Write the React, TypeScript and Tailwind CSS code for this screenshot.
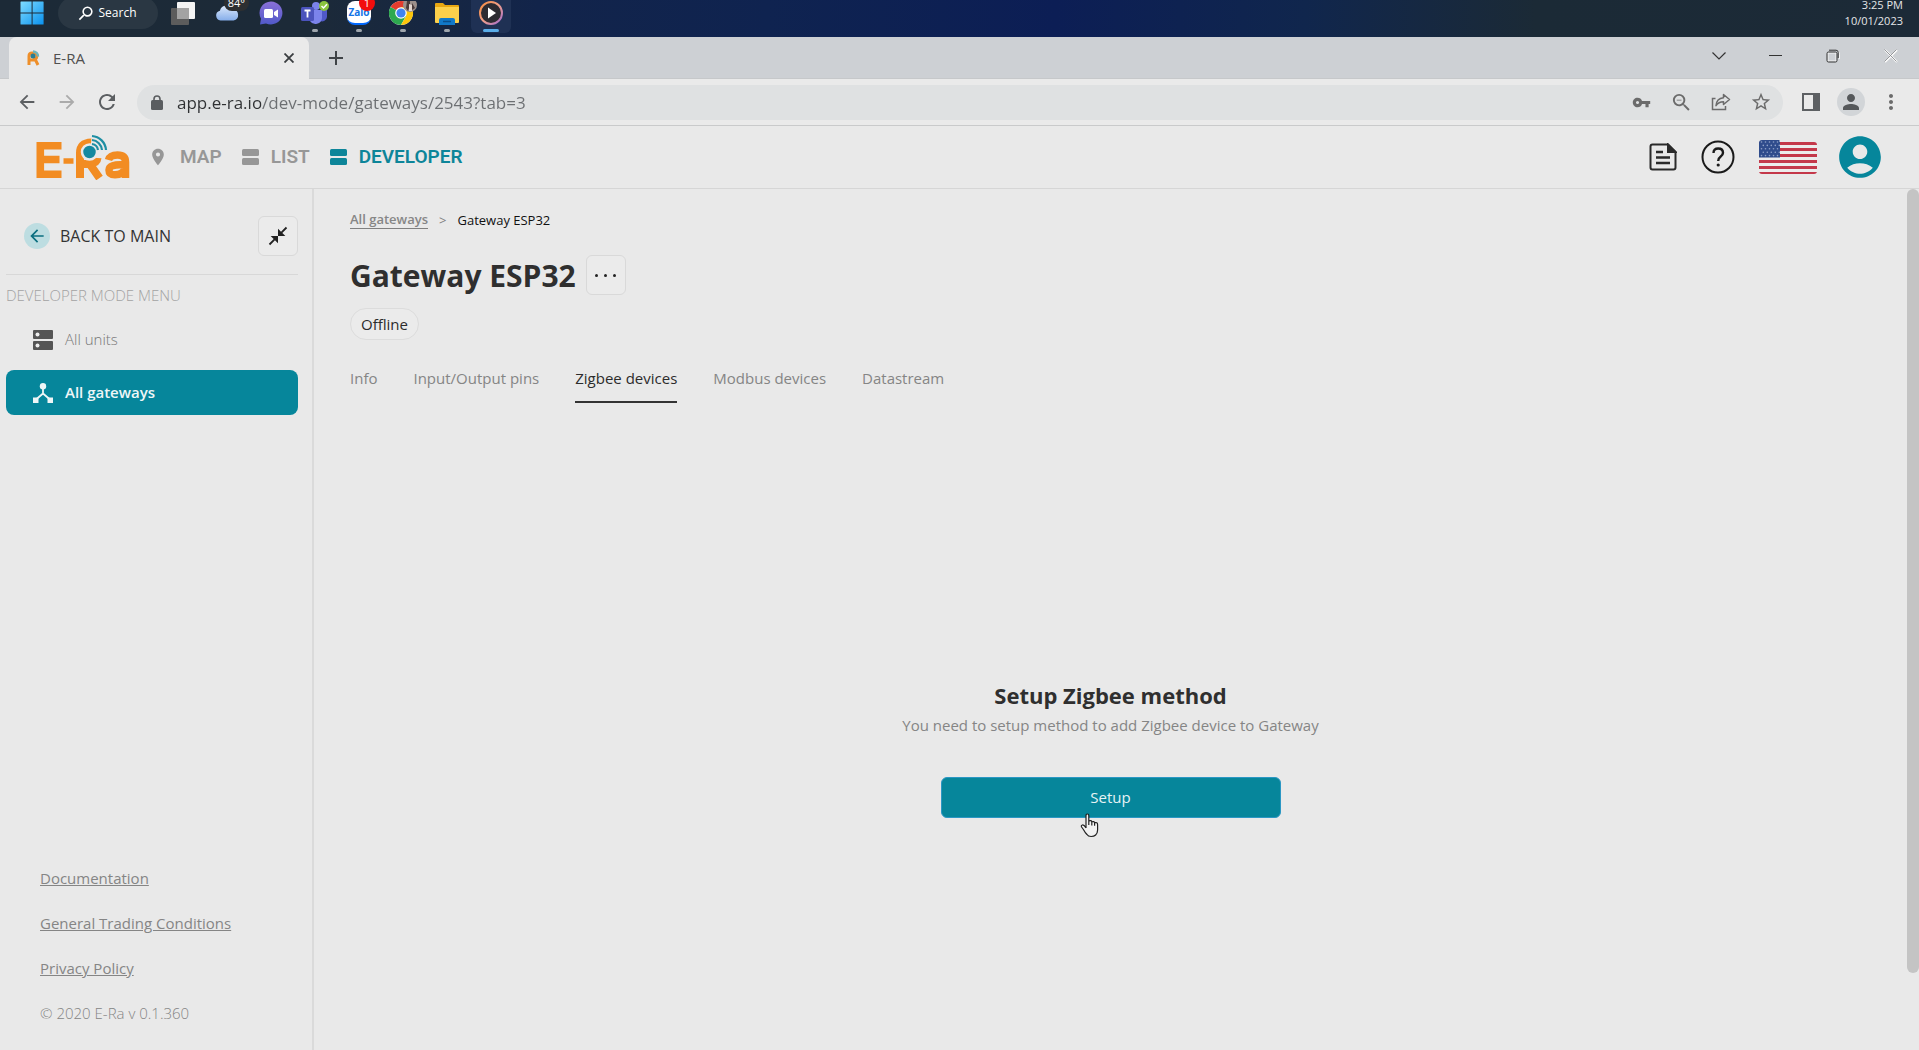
import type { ReactNode } from "react";
import {
  MdAccountCircle,
  MdArrowBack,
  MdArrowForward,
  MdCloseFullscreen,
  MdLocationOn,
  MdMoreVert,
  MdPerson,
  MdRefresh,
  MdSearch,
  MdStarBorder,
  MdVpnKey,
  MdZoomOut,
} from "react-icons/md";

/* ---------- Taskbar icons ---------- */

function WindowsLogo() {
  return (
    <svg width="24" height="24" viewBox="0 0 24 24" aria-hidden="true">
      <defs>
        <linearGradient id="win" x1="0" y1="0" x2="1" y2="1">
          <stop offset="0" stopColor="#7fdcff" />
          <stop offset="1" stopColor="#0a91ee" />
        </linearGradient>
      </defs>
      <path d="M1 .5h10.6v11H.5V1a.5.5 0 0 1 .5-.5zM12.6.5h10.5a.5.5 0 0 1 .5.5v10.5h-11zM.5 12.5h11.1v11H1a.5.5 0 0 1-.5-.5zM12.6 12.5h11V23a.5.5 0 0 1-.5.5H12.6z" fill="url(#win)" />
    </svg>
  );
}

function TaskView() {
  return (
    <svg width="24" height="24" viewBox="0 0 24 24" aria-hidden="true">
      <rect x="6" y="1" width="18" height="17" rx="1" fill="#f4f4f4" />
      <rect x="0" y="7" width="18" height="17" rx="1" fill="#5c5c5c" />
      <rect x="6" y="7" width="12" height="11" fill="#a3a3a3" />
    </svg>
  );
}

function WeatherCloud() {
  return (
    <svg width="24" height="24" viewBox="0 0 24 24" aria-hidden="true">
      <defs>
        <linearGradient id="cloud" x1="0" y1="0" x2="0" y2="1">
          <stop offset="0" stopColor="#dbe8fb" />
          <stop offset="1" stopColor="#86aeea" />
        </linearGradient>
      </defs>
      <path d="M5.500 19.500a5 5 0 0 1-.6-9.800A7 7 0 0 1 18 8.600a5.500 5.500 0 0 1 .6 10.900z" fill="url(#cloud)" />
    </svg>
  );
}

function ChatIcon() {
  return (
    <svg width="24" height="24" viewBox="0 0 24 24" aria-hidden="true">
      <defs>
        <linearGradient id="chat" x1="0" y1="0" x2="0" y2="1">
          <stop offset="0" stopColor="#8a70d8" />
          <stop offset="1" stopColor="#5059c9" />
        </linearGradient>
      </defs>
      <path d="M12 .5a11.500 11.500 0 1 1-5 21.900L1 23.500l1-5.800A11.500 11.500 0 0 1 12 .5z" fill="url(#chat)" />
      <rect x="5" y="8" width="9" height="9" rx="1.500" fill="#fff" />
      <path d="M15 11l4-2.500v8L15 14z" fill="#fff" />
    </svg>
  );
}

function TeamsIcon() {
  return (
    <svg width="28" height="24" viewBox="0 0 28 24" aria-hidden="true">
      <circle cx="15" cy="5" r="4" fill="#7b83eb" />
      <path d="M17 9h9v7a5 5 0 0 1-7 4z" fill="#5059c9" />
      <path d="M9 9h12v8a6.500 6.500 0 0 1-12 3z" fill="#7b83eb" />
      <rect x="0" y="6" width="13" height="14" rx="1.500" fill="#4b53bc" />
      <path d="M3.500 9.500h6M6.500 9.500v7" stroke="#fff" strokeWidth="1.800" />
      <circle cx="23" cy="5" r="5" fill="#8ac43f" />
      <path d="M20.500 5l2 2 3.500-3.800" fill="none" stroke="#fff" strokeWidth="1.500" />
    </svg>
  );
}

function ZaloIcon() {
  return (
    <span className="relative flex size-6 items-center justify-center rounded-lg border-b-2 border-[#0068ff] bg-white text-[10px] font-bold text-[#1273e6]">
      Zalo
      <span className="absolute -top-1.5 -right-1 flex size-4 items-center justify-center rounded-full bg-[#f20d0d] text-[11px] font-normal text-white">
        1
      </span>
    </span>
  );
}

function ChromeIcon() {
  return (
    <svg width="28" height="24" viewBox="0 0 28 24" aria-hidden="true">
      <circle cx="12" cy="12" r="12" fill="#fff" />
      <path d="M12 12L1.600 6A12 12 0 0 1 22.400 6z" fill="#e33b2e" />
      <path d="M12 12L1.600 6A12 12 0 0 0 12 24l5-9z" fill="#2da94f" />
      <path d="M12 6h10.400A12 12 0 0 1 12 24l5.200-9z" fill="#fdc60a" />
      <circle cx="12" cy="12" r="5.800" fill="#fff" />
      <circle cx="12" cy="12" r="4.600" fill="#3f83f1" />
      <circle cx="21" cy="4" r="7" fill="#9b8f8b" />
      <path d="M18 0h3v4l-2 6-2-3zM23 2l3 5-3 2z" fill="#4a3b3b" />
      <path d="M20 3l3 1v6h-3z" fill="#e2d6d0" />
    </svg>
  );
}

function FolderIcon() {
  return (
    <svg width="24" height="24" viewBox="0 0 24 24" aria-hidden="true">
      <path d="M0 3a1 1 0 0 1 1-1h7l2 2h13a1 1 0 0 1 1 1v4H0z" fill="#e8a712" />
      <path d="M0 6h24v15a1 1 0 0 1-1 1H1a1 1 0 0 1-1-1z" fill="#fcd04b" />
      <path d="M4 24v-5a2 2 0 0 1 2-2h12a2 2 0 0 1 2 2v5z" fill="#1179c9" />
      <path d="M8 20.500h8" stroke="#0a4f8c" strokeWidth="1.500" />
    </svg>
  );
}

function PlayerIcon() {
  return (
    <svg width="24" height="24" viewBox="0 0 24 24" aria-hidden="true">
      <defs>
        <linearGradient id="ring" x1="0" y1="0" x2="1" y2="1">
          <stop offset="0" stopColor="#f58a3c" />
          <stop offset=".5" stopColor="#f0a08a" />
          <stop offset="1" stopColor="#a06bd0" />
        </linearGradient>
      </defs>
      <circle cx="12" cy="12" r="11" fill="#2c2b31" stroke="url(#ring)" strokeWidth="2" />
      <path d="M9 6.500l8 5.500-8 5.500z" fill="#fff" />
    </svg>
  );
}

function TaskButton({
  label,
  children,
  running = false,
}: {
  label: string;
  children: ReactNode;
  running?: boolean;
}) {
  return (
    <button type="button" aria-label={label} className="relative flex h-12 w-11 items-center justify-center">
      {children}
      {running && <span className="absolute bottom-[5px] h-[3px] w-1.5 rounded-full bg-[#9fa6ad]" />}
    </button>
  );
}

function Taskbar() {
  return (
    <div className="flex h-[37px] shrink-0 items-end justify-between overflow-hidden bg-[linear-gradient(90deg,#1c2a37_0%,#1c2a38_16%,#12244a_28%,#0f2350_40%,#0c1e55_55%,#10264d_68%,#1b2a36_80%,#1c2a37_100%)] text-white">
      <div className="flex h-12 items-center pl-2.5">
        <TaskButton label="Start">
          <WindowsLogo />
        </TaskButton>
        <button type="button" className="mr-[3px] ml-1 flex h-8 w-[100px] items-center justify-center gap-1 rounded-full bg-[#2a3743] pr-1 text-[12px]">
          <MdSearch size={19} className="-scale-x-100" />
          Search
        </button>
        <TaskButton label="Task view">
          <TaskView />
        </TaskButton>
        <TaskButton label="Weather">
          <WeatherCloud />
          <span className="absolute top-1.5 right-0 rounded-full bg-[#2d2f31] px-1 text-[11px] leading-4">84°</span>
        </TaskButton>
        <TaskButton label="Chat">
          <ChatIcon />
        </TaskButton>
        <TaskButton label="Teams" running>
          <TeamsIcon />
        </TaskButton>
        <TaskButton label="Zalo" running>
          <ZaloIcon />
        </TaskButton>
        <TaskButton label="Chrome" running>
          <ChromeIcon />
        </TaskButton>
        <TaskButton label="File Explorer" running>
          <FolderIcon />
        </TaskButton>
        <button type="button" aria-label="Media player" className="relative ml-0.5 flex size-10 items-center justify-center rounded-md bg-[#1f3154]">
          <PlayerIcon />
          <span className="absolute bottom-px h-[3px] w-4 rounded-full bg-[#5aaeea]" />
        </button>
      </div>
      <div className="flex h-12 flex-col justify-center pr-4 text-right text-[11px] leading-4 text-[#e4e6e8]">
        <span>3:25 PM</span>
        <span>10/01/2023</span>
      </div>
    </div>
  );
}

/* ---------- Browser chrome ---------- */

function Favicon() {
  return (
    <svg width="14" height="16" viewBox="0 0 14 16" aria-hidden="true">
      <path d="M2 15V6q0-3 3-3h2q3 0 3 3 0 2-2 3l3 6M3.500 10H8" fill="none" stroke="#ee8f2a" strokeWidth="3" />
      <circle cx="6" cy="6" r="2.500" fill="#2a7d92" />
      <path d="M6 1.500a5 5 0 0 1 5 5" fill="none" stroke="#6cb5bd" strokeWidth="2.500" />
    </svg>
  );
}

function TabStrip() {
  return (
    <div className="flex h-[42px] shrink-0 items-stretch justify-between border-b border-[#c6c8ca] bg-[#cdd0d4]">
      <div className="flex">
        <div className="-mb-px ml-[9px] flex w-[300px] items-center rounded-t-lg bg-[#eaeaea] pr-3 pl-[18px] text-[15px] text-[#505050]">
          <Favicon />
          <span className="ml-3 flex-1">E-RA</span>
          <button type="button" aria-label="Close tab" className="flex size-4 items-center justify-center">
            <svg width="10" height="10" viewBox="0 0 10 10" aria-hidden="true">
              <path d="M.5.5l9 9M9.500.5l-9 9" stroke="#3a3d40" strokeWidth="1.800" />
            </svg>
          </button>
        </div>
        <button type="button" aria-label="New tab" className="ml-[15px] flex w-6 items-center justify-center">
          <svg width="16" height="16" viewBox="0 0 16 16" aria-hidden="true">
            <path d="M8 1v14M1 8h14" stroke="#3f4347" strokeWidth="2" />
          </svg>
        </button>
      </div>
      <div className="flex pb-1">
        <button type="button" aria-label="Search tabs" className="flex w-14 items-center justify-center">
          <svg width="14" height="8" viewBox="0 0 14 8" aria-hidden="true">
            <path d="M.5.5L7 7 13.500.5" fill="none" stroke="#333" strokeWidth="1.200" />
          </svg>
        </button>
        <button type="button" aria-label="Minimize" className="flex w-[57px] items-center justify-center">
          <span className="h-px w-[13px] bg-[#333]" />
        </button>
        <button type="button" aria-label="Restore" className="flex w-[58px] items-center justify-center">
          <svg width="14" height="14" viewBox="0 0 14 14" aria-hidden="true">
            <path d="M12 2.500q1.500 1 1.500 3V10" fill="none" stroke="#f4f4f4" />
            <rect x="2" y="4" width="8" height="8" fill="none" stroke="#f4f4f4" />
            <rect x="1" y="3" width="10" height="10" rx="1.500" fill="none" stroke="#333" />
            <path d="M3 1.200h7q2.200 0 2.200 2.200V9" fill="none" stroke="#333" />
          </svg>
        </button>
        <button type="button" aria-label="Close" className="flex w-[57px] items-center justify-center">
          <svg width="14" height="14" viewBox="0 0 14 14" aria-hidden="true">
            <path d="M1 1l12 12M13 1L1 13" stroke="#fafafa" strokeWidth="2" />
            <path d="M.5.5l12 12M12.500.5l-12 12" stroke="#7d8084" strokeWidth=".8" />
          </svg>
        </button>
      </div>
    </div>
  );
}

function LockIcon() {
  return (
    <svg width="12" height="15" viewBox="0 0 12 15" aria-hidden="true">
      <rect x="0" y="5" width="12" height="10" rx="1.500" fill="#5a5d60" />
      <path d="M3 6V4a3 3 0 0 1 6 0v2" fill="none" stroke="#5a5d60" strokeWidth="1.600" />
    </svg>
  );
}

function ShareIcon() {
  return (
    <svg width="20" height="18" viewBox="0 0 20 18" fill="none" stroke="#6b6b6b" strokeWidth="1.500" aria-hidden="true">
      <path d="M4.500 5.500H1.500v11h13V13" />
      <path d="M12.500 1.500l6 5-6 5V8.700q-5 0-7.500 4 .5-7.500 7.500-8z" strokeLinejoin="round" />
    </svg>
  );
}

function IconButton({ label, children }: { label: string; children: ReactNode }) {
  return (
    <button type="button" aria-label={label} className="flex size-10 items-center justify-center text-[#6b6b6b]">
      {children}
    </button>
  );
}

function Toolbar() {
  return (
    <div className="flex h-[47px] shrink-0 items-center border-b border-[#c9cacb] bg-[#eaeaea] pr-2 pl-[7px]">
      <button type="button" aria-label="Back" className="flex size-10 items-center justify-center text-[#5c5f62]">
        <MdArrowBack size={22} />
      </button>
      <button type="button" aria-label="Forward" className="flex size-10 items-center justify-center text-[#ababab]">
        <MdArrowForward size={22} />
      </button>
      <button type="button" aria-label="Reload" className="flex size-10 items-center justify-center text-[#5c5f62]">
        <MdRefresh size={24} />
      </button>
      <div className="ml-2.5 flex h-[35px] flex-1 items-center rounded-full bg-[#dfe1e2] pr-0.5 pl-3.5">
        <LockIcon />
        <input
          type="text"
          aria-label="Address"
          defaultValue="app.e-ra.io/dev-mode/gateways/2543?tab=3"
          className="ml-3.5 h-8 min-w-0 flex-1 bg-[linear-gradient(90deg,#2f3133_84px,#6c6f72_84px)] bg-clip-text text-[17px] text-transparent outline-none"
        />
        <IconButton label="Passwords">
          <MdVpnKey size={19} />
        </IconButton>
        <IconButton label="Zoom">
          <MdZoomOut size={23} />
        </IconButton>
        <IconButton label="Share">
          <ShareIcon />
        </IconButton>
        <IconButton label="Bookmark">
          <MdStarBorder size={22} />
        </IconButton>
      </div>
      <div className="ml-2 flex">
        <IconButton label="Side panel">
          <svg width="18" height="18" viewBox="0 0 18 18" aria-hidden="true">
            <rect x="1" y="1" width="16" height="16" fill="none" stroke="#5d6063" strokeWidth="2" />
            <rect x="11" y="1" width="6" height="16" fill="#5d6063" />
          </svg>
        </IconButton>
        <IconButton label="Profile">
          <span className="flex size-7 items-center justify-center rounded-full bg-[#d2d5d8] text-[#55585b]">
            <MdPerson size={24} />
          </span>
        </IconButton>
        <IconButton label="Menu">
          <MdMoreVert size={24} />
        </IconButton>
      </div>
    </div>
  );
}

/* ---------- App header ---------- */

function Logo() {
  return (
    <svg width="94" height="46" viewBox="0 0 94 46" aria-label="E-Ra" role="img">
      <g fill="none" stroke="#f28c22">
        <path d="M25.500 11.700H4.300v28.600h21.200M4.500 25.500h19" strokeWidth="7.600" />
        <path d="M27.500 27h10" strokeWidth="5.500" />
        <path d="M44 44V19q0-10 11.500-10.500M47 30h6q8-.5 8.500-6M53 29l10.500 15" strokeWidth="8" />
        <path d="M72.500 26q1.500-5 9-5 8 0 8 7v16M88 31q-15-1-15 5 0 4.800 6 4.800 8 0 10-6" strokeWidth="7.500" />
      </g>
      <circle cx="53.500" cy="18" r="7.500" fill="#1489a0" stroke="#e9e9e9" strokeWidth="2.500" />
      <g fill="none">
        <path d="M55.500 7a15 15 0 0 1 11 11" stroke="#e9e9e9" strokeWidth="9" />
        <g stroke="#1f8fa3" strokeWidth="2.200">
          <path d="M56 2a15 15 0 0 1 14 14" />
          <path d="M56 6a11 11 0 0 1 10 10" />
          <path d="M56 10a7 7 0 0 1 6 6" />
        </g>
      </g>
    </svg>
  );
}

function RowsIcon() {
  return (
    <svg width="17" height="16" viewBox="0 0 17 16" fill="currentColor" aria-hidden="true">
      <rect width="17" height="7" rx="1.500" />
      <rect y="9" width="17" height="7" rx="1.500" />
    </svg>
  );
}

function UsFlag() {
  const stars = [0, 1, 2, 3, 4];
  return (
    <svg width="58" height="34" viewBox="0 0 58 34" aria-hidden="true">
      <defs>
        <clipPath id="flag">
          <path d="M0 3q0-3 3-3h17.500v2H55q3 0 3 3v26q0 3-3 3H3q-3 0-3-3z" />
        </clipPath>
      </defs>
      <g clipPath="url(#flag)">
        <rect width="58" height="34" fill="#ececec" />
        {[2, 8, 14, 20, 26, 32].map((y) => (
          <rect key={y} y={y} width="58" height="3" fill="#c4384a" />
        ))}
        <rect width="21" height="17.500" fill="#2f4c8c" />
        {stars.map((r) =>
          stars.map((c) => (
            <circle key={`${r}-${c}`} cx={2.5 + c * 4 + (r % 2) * 1.8} cy={2 + r * 3.4} r=".8" fill="#8fa2c8" />
          )),
        )}
      </g>
    </svg>
  );
}

function Header() {
  return (
    <header className="flex h-[63px] shrink-0 items-center justify-between border-b border-[#d6d6d6] pr-[38px] pl-9">
      <div className="flex items-center">
        <Logo />
        <nav className="ml-[18px] flex items-center gap-5 font-[Roboto,sans-serif] text-[19px] font-semibold text-[#979797]">
          <a href="#map" className="flex items-center gap-3">
            <MdLocationOn size={20} />
            MAP
          </a>
          <a href="#list" className="flex items-center gap-3">
            <RowsIcon />
            LIST
          </a>
          <a href="#developer" className="flex items-center gap-3 text-[#0d8599]">
            <RowsIcon />
            DEVELOPER
          </a>
        </nav>
      </div>
      <div className="flex items-center">
        <button type="button" aria-label="News">
          <svg width="28" height="28" viewBox="0 0 28 28" fill="none" stroke="#2a2a2a" strokeWidth="2" aria-hidden="true">
            <path d="M19 1.500H3.500q-2 0-2 2v21q0 2 2 2h21q2 0 2-2V9z" />
            <path d="M19 1.500V9h7.500z" fill="#2a2a2a" />
            <path d="M7 9h7M7 14.500h14M7 20h14" strokeWidth="2.400" />
          </svg>
        </button>
        <button type="button" aria-label="Help" className="ml-6">
          <svg width="34" height="34" viewBox="0 0 34 34" fill="none" stroke="#1a1a1a" strokeWidth="2" aria-hidden="true">
            <circle cx="17" cy="17" r="15.500" />
            <path d="M12.500 13q0-4.500 4.700-4.500T22 12.700q0 2.300-2.500 4-2.300 1.600-2.300 4.300" strokeWidth="2.400" />
            <circle cx="17.200" cy="25" r="1.600" fill="#1a1a1a" stroke="none" />
          </svg>
        </button>
        <button type="button" aria-label="Language" className="ml-6">
          <UsFlag />
        </button>
        <button type="button" aria-label="Account" className="-mr-1 ml-[18px] text-[#06869b]">
          <MdAccountCircle size={50} />
        </button>
      </div>
    </header>
  );
}

/* ---------- Sidebar ---------- */

function UnitsIcon() {
  return (
    <svg width="20" height="20" viewBox="0 0 20 20" aria-hidden="true">
      <rect width="20" height="9" rx="1" fill="#555" />
      <rect y="11" width="20" height="9" rx="1" fill="#555" />
      <circle cx="4.500" cy="4.500" r="2" fill="#eee" />
      <circle cx="4.500" cy="15.500" r="2" fill="#eee" />
    </svg>
  );
}

function GatewayIcon() {
  return (
    <svg width="20" height="20" viewBox="0 0 20 20" fill="currentColor" aria-hidden="true">
      <circle cx="10" cy="3.200" r="3.200" />
      <rect y="14.500" width="5.500" height="5.500" />
      <rect x="14.500" y="14.500" width="5.500" height="5.500" />
      <path d="M10 5v6M3 16.500l7-6 7 6" fill="none" stroke="currentColor" strokeWidth="1.800" />
    </svg>
  );
}

function Sidebar() {
  return (
    <aside className="flex w-[314px] shrink-0 flex-col justify-between border-r-2 border-[#dadada] pt-[27px] pr-3.5 pb-[25px] pl-1.5">
      <div>
        <div className="flex items-center justify-between border-b border-[#d8d8d8] pb-[18px] pl-[18px]">
          <a href="#main" className="flex items-center gap-2.5 text-[16px] text-[#333]">
            <span className="flex size-[26px] items-center justify-center rounded-full bg-[#bddde1] text-[#0b6f80]">
              <MdArrowBack size={20} />
            </span>
            BACK TO MAIN
          </a>
          <button type="button" aria-label="Collapse menu" className="flex size-10 items-center justify-center rounded-md border border-[#d9d9d9] bg-[#ebebeb] text-[#222]">
            <MdCloseFullscreen size={22} />
          </button>
        </div>
        <p className="mt-2 text-[15px] leading-6 font-light text-[#a3a3a3]">DEVELOPER MODE MENU</p>
        <nav className="mt-2.5 flex flex-col gap-2 text-[15px]">
          <a href="#units" className="flex h-[45px] items-center gap-3 px-[27px] font-light text-[#777]">
            <UnitsIcon />
            All units
          </a>
          <a href="#gateways" className="flex h-[45px] items-center gap-3 rounded-lg bg-[#06869b] px-[27px] font-semibold text-[#eef6f7]">
            <GatewayIcon />
            All gateways
          </a>
        </nav>
      </div>
      <footer className="flex flex-col items-start gap-[21px] pl-[34px] text-[15px] leading-6 text-[#858585]">
        <a href="#docs" className="underline">
          Documentation
        </a>
        <a href="#terms" className="underline">
          General Trading Conditions
        </a>
        <a href="#privacy" className="underline">
          Privacy Policy
        </a>
        <span className="font-light">© 2020 E-Ra v 0.1.360</span>
      </footer>
    </aside>
  );
}

/* ---------- Main content ---------- */

const tabs = ["Info", "Input/Output pins", "Zigbee devices", "Modbus devices", "Datastream"];

function HandCursor() {
  return (
    <svg width="20" height="25" viewBox="0 0 20 25" aria-hidden="true" className="absolute top-9 left-[139px]">
      <path
        d="M6 15V2.800q0-1.800 1.400-1.800t1.400 1.800V8q2.600-1 3 .8 2.300-.8 2.800.9 3-.7 3 2V17q0 3-2 5-1.500 1.500-4.500 1.500T7 21.500q-2-2-3.600-5L1.600 14q-.8-1.600.8-2T6 15M8.800 8v4M11.800 8.800v3.700M14.600 9.700v3"
        fill="#f2f2f2"
        stroke="#222"
        strokeWidth="1.200"
        strokeLinejoin="round"
      />
    </svg>
  );
}

function Main() {
  return (
    <main className="flex flex-1 flex-col px-9 pt-[19px]">
      <div className="flex items-center gap-[11px] text-[13px] leading-6">
        <a href="#all" className="border-b border-[#808080] leading-[17px] font-semibold text-[#868686]">
          All gateways
        </a>
        <span className="text-[#808080]">&gt;</span>
        <span className="text-[#111]">Gateway ESP32</span>
      </div>
      <div className="mt-[22px] flex items-center gap-2.5">
        <h1 className="pt-0.5 text-[30px] leading-10 font-bold text-[#2f2f2f]">Gateway ESP32</h1>
        <button type="button" aria-label="More actions" className="flex size-10 items-center justify-center gap-1.5 rounded-md border border-[#d9d9d9] bg-[#ebebeb]">
          <span className="size-[3px] rounded-full bg-[#222]" />
          <span className="size-[3px] rounded-full bg-[#222]" />
          <span className="size-[3px] rounded-full bg-[#222]" />
        </button>
      </div>
      <span className="mt-3 flex h-8 items-center self-start rounded-full border border-[#dcdcdc] bg-[#ebebeb] px-2.5 text-[15px] text-[#2c2c2c]">
        Offline
      </span>
      <div role="tablist" className="mt-[26px] flex gap-9 text-[15px] text-[#858585]">
        {tabs.map((tab) => {
          const active = tab === "Zigbee devices";
          return (
            <button
              key={tab}
              type="button"
              role="tab"
              aria-selected={active}
              className={
                active
                  ? "border-b-2 border-[#333] pb-[11px] leading-6 text-[#2c2c2c]"
                  : "border-b-2 border-transparent pb-[11px] leading-6"
              }
            >
              {tab}
            </button>
          );
        })}
      </div>
      <section className="flex flex-1 flex-col items-center justify-center pt-11">
        <h2 className="text-[22px] leading-8 font-bold text-[#2f2f2f]">Setup Zigbee method</h2>
        <p className="mt-0.5 text-[15px] leading-6 text-[#858585]">
          You need to setup method to add Zigbee device to Gateway
        </p>
        <div className="relative mt-10">
          <button type="button" className="h-[41px] w-[340px] rounded-md border border-[#2b97c4] bg-[#06869b] text-[15px] text-[#e6f3f5]">
            Setup
          </button>
          <HandCursor />
        </div>
      </section>
    </main>
  );
}

export default function App() {
  return (
    <div className="flex min-h-screen flex-col bg-[#e9e9e9] font-['Open_Sans','Noto_Sans',sans-serif]">
      <Taskbar />
      <TabStrip />
      <Toolbar />
      <Header />
      <div className="flex flex-1">
        <Sidebar />
        <Main />
        <div className="flex w-3 shrink-0 flex-col">
          <div className="flex-[91] rounded-full bg-[#c4c4c4]" />
          <div className="flex-[9]" />
        </div>
      </div>
    </div>
  );
}
